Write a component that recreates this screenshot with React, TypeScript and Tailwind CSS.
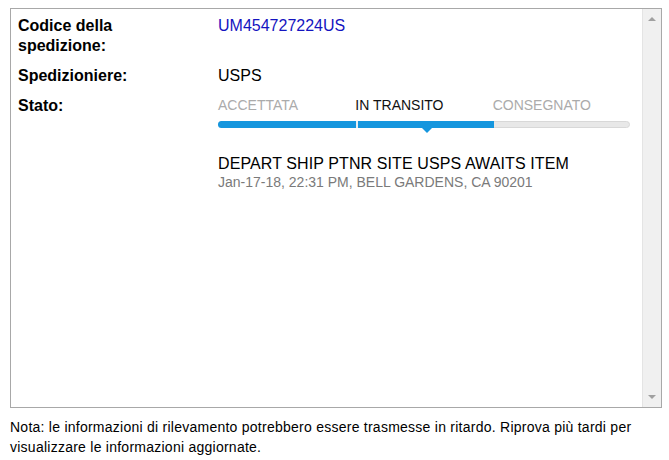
import React from "react";

const steps = [
  { label: "ACCETTATA", active: false },
  { label: "IN TRANSITO", active: true },
  { label: "CONSEGNATO", active: false },
];

const Progress = () => (
  <div className="mt-[-1px] w-[412px]">
    <div className="flex text-[14px] leading-5">
      {steps.map((s) => (
        <div key={s.label} className={`flex-1 ${s.active ? "text-[#111]" : "text-[#ababab]"}`}>
          {s.label}
        </div>
      ))}
    </div>
    <div className="relative mt-[6px] h-[7px] rounded-full bg-[#e8e8e8] border border-[#d8d8d8]">
      <div className="absolute left-[-1px] top-[-1px] h-[7px] w-[276px] rounded-l-full bg-[#1596de]" />
      <div className="absolute left-[137px] top-[-1px] h-[7px] w-[2px] bg-[#e8eef2]" />
      <div className="absolute left-[202px] top-[5px] w-0 h-0 border-l-[6px] border-r-[6px] border-t-[6px] border-l-transparent border-r-transparent border-t-[#1596de]" />
    </div>
  </div>
);

const Row = ({ label, children, className = "" }: { label: string; children: React.ReactNode; className?: string }) => (
  <div className={`flex ${className}`}>
    <div className="w-[140px] mr-[60px] shrink-0 font-bold text-[16px] leading-5 text-black">{label}</div>
    <div className="flex-1">{children}</div>
  </div>
);

const App = () => {
  return (
    <div className="w-[669px] h-[460px] bg-white pt-[8px] pl-[10px] font-['Liberation_Sans',Arial,sans-serif]">
      <div className="flex w-[652px] h-[400px] border border-[#a8a8a8]">
        <div className="flex-1 pl-[7px] pt-[7px]">
          <Row label="Codice della spedizione:" className="mb-[10px]">
            <div className="text-[16px] leading-5 text-[#1414c0]">UM454727224US</div>
          </Row>
          <Row label="Spedizioniere:" className="mb-[10px]">
            <div className="text-[16px] leading-5 text-black">USPS</div>
          </Row>
          <Row label="Stato:">
            <Progress />
            <div className="mt-[26px] text-[16px] leading-[19px] text-black tracking-[0.1px]">DEPART SHIP PTNR SITE USPS AWAITS ITEM</div>
            <div className="text-[14px] leading-[18px] text-[#7a7a7a]">Jan-17-18, 22:31 PM, BELL GARDENS, CA 90201</div>
          </Row>
        </div>
        <div className="w-[19px] bg-[#f0f0f0] border-l border-[#e4e4e4] flex flex-col justify-between items-center py-[8px]">
          <div className="w-0 h-0 border-l-[4px] border-r-[4px] border-b-[4px] border-l-transparent border-r-transparent border-b-[#a0a0a0]" />
          <div className="w-0 h-0 border-l-[4px] border-r-[4px] border-t-[4px] border-l-transparent border-r-transparent border-t-[#a0a0a0]" />
        </div>
      </div>
      <p className="mt-[9px] text-[14px] leading-5 text-black w-[645px] tracking-[0.25px]">
        Nota: le informazioni di rilevamento potrebbero essere trasmesse in ritardo. Riprova più tardi per visualizzare le informazioni aggiornate.
      </p>
    </div>
  );
};

export default App;
